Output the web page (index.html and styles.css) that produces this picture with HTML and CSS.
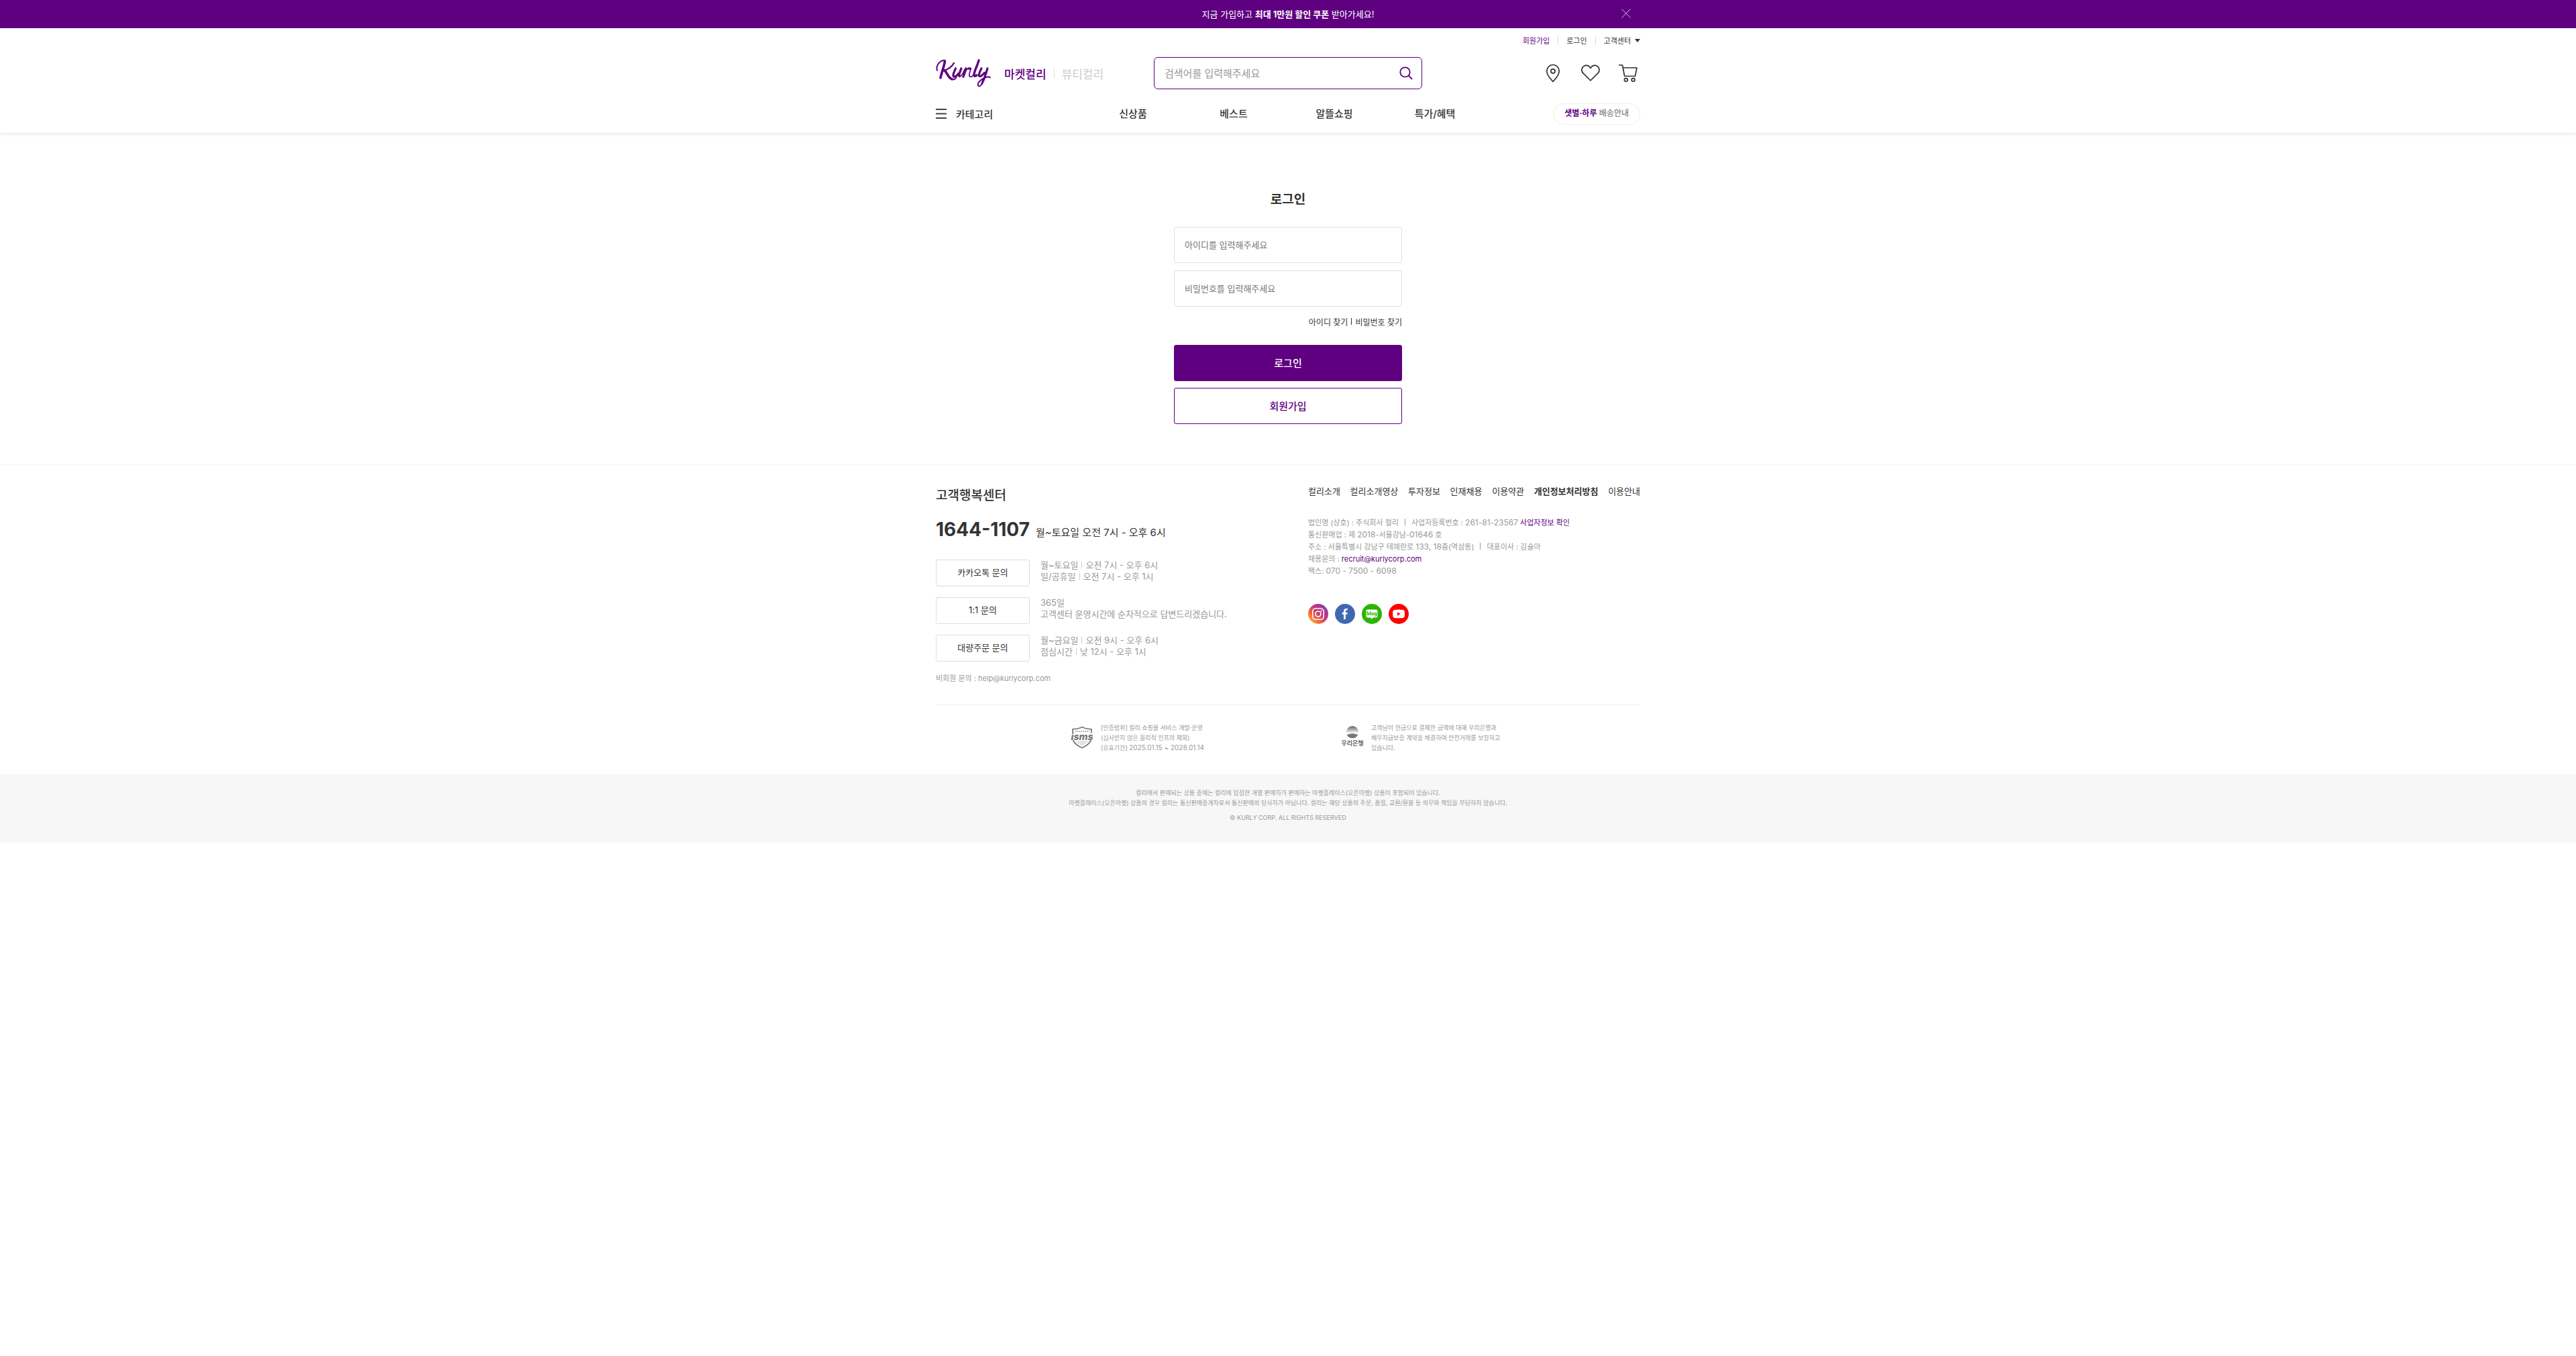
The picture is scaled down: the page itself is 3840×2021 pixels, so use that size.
FILE: index.html
```html
<!DOCTYPE html>
<html lang="ko">
<head>
<meta charset="utf-8">
<meta name="viewport" content="width=device-width, initial-scale=1">
<title>로그인 - 컬리</title>
<link rel="stylesheet" href="styles.css">
</head>
<body>
<div class="promo">
  <div class="container promo-inner">
    <a href="#" class="promo-link">지금 가입하고 <b>최대 1만원 할인 쿠폰</b> 받아가세요!</a>
    <button type="button" class="promo-close" aria-label="닫기">
      <svg width="14" height="14" viewBox="0 0 14 14" fill="none" stroke="#fff" stroke-opacity=".7" stroke-width="1"><path d="M.5.5l13 13M13.5.5l-13 13"/></svg>
    </button>
  </div>
</div>

<header class="header">
  <div class="container">
    <div class="user-menu">
      <a href="#" class="join">회원가입</a>
      <a href="#">로그인</a>
      <a href="#" class="support">고객센터</a>
    </div>
    <div class="brand-row">
      <div class="brand">
        <a href="#" class="logo" aria-label="Kurly">
          <svg width="82" height="42" viewBox="0 0 82 42" fill="none" stroke="#5f0080" stroke-linecap="round" stroke-linejoin="round">
            <path stroke-width="2" d="M2 17C0 11 4 4 11 2c2-.5 3 0 3 1.500"/>
            <path stroke-width="3.600" d="M13.500 3C13 9 9 19 7 28"/>
            <path stroke-width="2.400" d="M27 6C23 13 17 16 11 17.500"/>
            <path stroke-width="3.600" d="M13 17c4 3 5 11 11 13"/>
            <path stroke-width="2" d="M24 30c3 1 5 0 6.500-2"/>
            <path stroke-width="3.200" d="M29.500 14c-1.500 4-4 8-3.500 11 .5 3 5 1 8-3.500M38 14c-1.500 4-4 9-3 11.500"/>
            <path stroke-width="1.800" d="M35 25.500c1.500 2 5-2 8-10"/>
            <path stroke-width="3.200" d="M45 14c-1 4-2.500 8-4 12.500"/>
            <path stroke-width="1.600" d="M42.500 21c1.500-3 3.500-6 6-7"/>
            <path stroke-width="3.200" d="M48.500 14.300q1.500-.8 3.200.2"/>
            <path stroke-width="3.400" d="M64 2c-1.500 7-6.500 15-7 21 0 3 2 3 4 1"/>
            <path stroke-width="1.800" d="M52 15.500c-1.500 4-3 9-1.500 10.500 2 1.500 5-1 7-4"/>
            <path stroke-width="3.200" d="M68 14c-2 4-4.500 9-3.500 11 1.500 2 5-1 8-4.500M77 14c-2 7-5 16-8 22"/>
            <path stroke-width="2" d="M69 36c-1.500 4-5 6-6 3.500-1.500-5 6-10 12-12.500 3-1 5-.5 6 .5"/>
          </svg>
        </a>
        <a href="#" class="market on">마켓컬리</a>
        <a href="#" class="market">뷰티컬리</a>
      </div>
      <form class="search">
        <input type="text" aria-label="검색" placeholder="검색어를 입력해주세요">
        <button type="button" aria-label="검색하기">
          <svg width="20" height="20" viewBox="0 0 20 20" fill="none" stroke="#5f0080" stroke-width="1.800" stroke-linecap="round"><circle cx="8.500" cy="8.500" r="7.200"/><path d="M14 14l4.500 4.500"/></svg>
        </button>
      </form>
      <div class="shortcuts">
        <a href="#" aria-label="배송지">
          <svg width="36" height="36" viewBox="0 0 36 36" fill="none" stroke="#333" stroke-width="1.700"><path d="M18 30.500c-2.500-2.500-9.200-9-9.200-15.500a9.200 9.500 0 0 1 18.400 0c0 6.500-6.700 13-9.200 15.500z"/><circle cx="18" cy="15" r="3.100"/></svg>
        </a>
        <a href="#" aria-label="찜하기">
          <svg width="36" height="36" viewBox="0 0 36 36" fill="none" stroke="#333" stroke-width="1.700" stroke-linejoin="round"><path d="M18 29L7 18.200C3.600 14.700 4.600 9.500 8.200 7.500c3.500-1.900 7.300-.7 9.800 3 2.500-3.700 6.300-4.900 9.800-3 3.600 2 4.600 7.200 1.200 10.700z"/></svg>
        </a>
        <a href="#" aria-label="장바구니">
          <svg width="36" height="36" viewBox="0 0 36 36" fill="none" stroke="#333" stroke-width="1.700" stroke-linejoin="round"><path d="M4 6h5.500l3.200 16.500h15.800L31 10H10.300"/><circle cx="14.800" cy="28" r="2.400"/><circle cx="25.600" cy="28" r="2.400"/></svg>
        </a>
      </div>
    </div>
    <nav class="gnb">
      <button type="button" class="category">
        <svg width="16" height="15" viewBox="0 0 16 15" fill="#444"><path d="M0 0h16v2H0zM0 6.500h16v2H0zM0 13h16v2H0z"/></svg>
        카테고리
      </button>
      <ul class="gnb-list">
        <li><a href="#">신상품</a></li>
        <li><a href="#">베스트</a></li>
        <li><a href="#">알뜰쇼핑</a></li>
        <li><a href="#">특가/혜택</a></li>
      </ul>
      <a href="#" class="delivery"><b>샛별·하루</b> 배송안내</a>
    </nav>
  </div>
</header>

<main class="login">
  <h1>로그인</h1>
  <form class="login-form">
    <input type="text" aria-label="아이디" placeholder="아이디를 입력해주세요">
    <input type="password" aria-label="비밀번호" placeholder="비밀번호를 입력해주세요">
    <div class="find"><a href="#">아이디 찾기</a><a href="#">비밀번호 찾기</a></div>
    <button type="button" class="btn primary">로그인</button>
    <button type="button" class="btn">회원가입</button>
  </form>
</main>

<footer class="footer">
  <div class="container footer-top">
    <section class="cs">
      <h2>고객행복센터</h2>
      <p class="phone"><strong>1644-1107</strong> <span>월~토요일 오전 7시 - 오후 6시</span></p>
      <div class="cs-row">
        <button type="button">카카오톡 문의</button>
        <p><span class="bar">월~토요일</span>오전 7시 - 오후 6시<br><span class="bar">일/공휴일</span>오전 7시 - 오후 1시</p>
      </div>
      <div class="cs-row">
        <button type="button">1:1 문의</button>
        <p>365일<br>고객센터 운영시간에 순차적으로 답변드리겠습니다.</p>
      </div>
      <div class="cs-row">
        <button type="button">대량주문 문의</button>
        <p><span class="bar">월~금요일</span>오전 9시 - 오후 6시<br><span class="bar">점심시간</span>낮 12시 - 오후 1시</p>
      </div>
      <p class="guest">비회원 문의 : <a href="#">help@kurlycorp.com</a></p>
    </section>
    <section class="company">
      <ul class="links">
        <li><a href="#">컬리소개</a></li>
        <li><a href="#">컬리소개영상</a></li>
        <li><a href="#">투자정보</a></li>
        <li><a href="#">인재채용</a></li>
        <li><a href="#">이용약관</a></li>
        <li><a href="#" class="strong">개인정보처리방침</a></li>
        <li><a href="#">이용안내</a></li>
      </ul>
      <div class="info">
        <p><span class="bar wide">법인명 (상호) : 주식회사 컬리</span>사업자등록번호 : <span class="num">261-81-23567</span> <a href="#">사업자정보 확인</a></p>
        <p>통신판매업 : 제 <span class="num">2018</span>-서울강남-<span class="num">01646</span> 호</p>
        <p><span class="bar wide">주소 : 서울특별시 강남구 테헤란로 <span class="num">133, 18</span>층(역삼동)</span>대표이사 : 김슬아</p>
        <p>채용문의 : <a href="#">recruit@kurlycorp.com</a></p>
        <p>팩스: <span class="num">070 - 7500 - 6098</span></p>
      </div>
      <div class="social">
        <a href="#" aria-label="인스타그램">
          <svg width="30" height="30" viewBox="0 0 30 30"><defs><linearGradient id="insta" x1="0" y1="1" x2="1" y2="0"><stop offset=".1" stop-color="#fdbb4b"/><stop offset=".3" stop-color="#f56f35"/><stop offset=".58" stop-color="#c9317f"/><stop offset=".9" stop-color="#7a45b5"/></linearGradient></defs><circle cx="15" cy="15" r="15" fill="url(#insta)"/><g fill="none" stroke="#fff" stroke-width="1.600"><rect x="6.800" y="6.800" width="16.400" height="16.400" rx="4.500"/><circle cx="15" cy="15" r="4"/></g><circle cx="19.700" cy="10.300" r="1.100" fill="#fff"/></svg>
        </a>
        <a href="#" aria-label="페이스북">
          <svg width="30" height="30" viewBox="0 0 30 30"><circle cx="15" cy="15" r="15" fill="#4267b2"/><path fill="#fff" d="M13 23v-7.300h-2.300v-2.900H13v-2.100c0-2.500 1.500-3.800 3.700-3.800l2.100.1v2.600h-1.500c-1.100 0-1.400.5-1.400 1.400v1.800h2.800l-.4 2.900h-2.400V23z"/></svg>
        </a>
        <a href="#" aria-label="블로그">
          <svg width="30" height="30" viewBox="0 0 30 30"><circle cx="15" cy="15" r="15" fill="#2db400"/><path fill="#fff" d="M9 8.500h12a2.500 2.500 0 0 1 2.500 2.500v7a2.500 2.500 0 0 1-2.500 2.500h-4.500L14.800 23l-1.700-2.500H9A2.500 2.500 0 0 1 6.500 18v-7A2.500 2.500 0 0 1 9 8.500z"/><text x="15" y="17" text-anchor="middle" class="blog-text">blog</text></svg>
        </a>
        <a href="#" aria-label="유튜브">
          <svg width="30" height="30" viewBox="0 0 30 30"><circle cx="15" cy="15" r="15" fill="#f00"/><path fill="#fff" d="M8.500 9q6.500-.9 13 0 2 .3 2.200 2.200.5 3.700 0 7.400-.2 2-2.200 2.300-6.500.8-13 0-2-.3-2.200-2.300-.5-3.700 0-7.400Q6.500 9.300 8.500 9z"/><path fill="#f00" d="M13 12.300v5.400l4.500-2.700z"/></svg>
        </a>
      </div>
    </section>
  </div>
  <div class="container certs">
    <div class="cert">
      <svg width="34" height="34" viewBox="0 0 34 34"><path fill="#fff" stroke="#7b7b7b" stroke-width="1.800" d="M17 1.500C14 3.500 9.500 4.500 3 4.800V17c0 8 7 12.500 14 15.500 7-3 14-7.500 14-15.500V4.800C24.500 4.500 20 3.500 17 1.500z"/><path stroke="#b5b5b5" stroke-width="2" stroke-dasharray="2 1" d="M6 8h22"/><path fill="#fff" d="M0 10.500h34V21H0z"/><text x="17" y="20.500" text-anchor="middle" class="isms-text">isms</text><path stroke="#c4c4c4" stroke-width="1" d="M9 23.500h16M11 25.500h12M14 27.500h6"/></svg>
      <p>[인증범위] 컬리 쇼핑몰 서비스 개발·운영<br>(심사받지 않은 물리적 인프라 제외)<br>[유효기간] <span class="num">2025.01.15 ~ 2028.01.14</span></p>
    </div>
    <div class="cert">
      <div class="bank">
        <svg width="18" height="18" viewBox="0 0 18 18"><defs><linearGradient id="orb" x1="0" y1="0" x2="0" y2="1"><stop offset=".1" stop-color="#777"/><stop offset=".6" stop-color="#fff"/></linearGradient></defs><circle cx="9" cy="9" r="9" fill="url(#orb)"/><path fill="#777" d="M.8 13Q9 9.500 17.200 13A9 9 0 0 1 .8 13z"/></svg>
        <span>우리은행</span>
      </div>
      <p>고객님이 현금으로 결제한 금액에 대해 우리은행과<br>채무지급보증 계약을 체결하여 안전거래를 보장하고<br>있습니다.</p>
    </div>
  </div>
  <div class="legal">
    <p>컬리에서 판매되는 상품 중에는 컬리에 입점한 개별 판매자가 판매하는 마켓플레이스(오픈마켓) 상품이 포함되어 있습니다.</p>
    <p>마켓플레이스(오픈마켓) 상품의 경우 컬리는 통신판매중개자로서 통신판매의 당사자가 아닙니다. 컬리는 해당 상품의 주문, 품질, 교환/환불 등 의무와 책임을 부담하지 않습니다.</p>
    <p class="copy">© KURLY CORP. ALL RIGHTS RESERVED</p>
  </div>
</footer>
</body>
</html>
```
FILE: styles.css
```css
* { box-sizing: border-box; margin: 0; padding: 0; }
body { font-family: Inter, "Noto Sans CJK KR", sans-serif; font-size: 13px; color: #333; background: #fff; }
a { color: inherit; text-decoration: none; }
ul { list-style: none; }
svg { display: block; }
button, input { font: inherit; color: inherit; }
button { background: none; border: 0; cursor: pointer; }
.container { width: 100%; max-width: 1050px; margin: 0 auto; }

/* promo banner */
.promo { background: #5f0080; color: #fff; }
.promo-inner { display: grid; grid-template-columns: 1fr auto 1fr; align-items: center; height: 42px; }
.promo-link { grid-column: 2; padding-bottom: 1px; }
.promo-close { justify-self: end; padding: 0 14px 2px; }

/* header */
.header { height: 156px; box-shadow: 0 3px 4px rgba(0, 0, 0, .07); }
.user-menu { display: flex; justify-content: flex-end; align-items: center; height: 36px; font-size: 11px; }
.user-menu a + a::before { content: ""; width: 1px; height: 13px; margin: 0 12px; background: #d9d9d9; }
.user-menu a { display: flex; align-items: center; }
.user-menu .join { color: #5f0080; }
.support::after { content: ""; margin-left: 6px; border: 4px solid transparent; border-top: 5px solid #333; border-bottom: 0; }
.brand-row { display: grid; grid-template-columns: 1fr 400px 1fr; align-items: center; height: 62px; }
.brand { display: flex; align-items: center; }
.logo { margin-right: 20px; }
.market { display: flex; align-items: center; font-size: 17px; color: #ccc; }
.market.on { color: #5f0080; font-weight: 500; }
.market + .market::before { content: ""; width: 1px; height: 14px; margin: 0 11px; background: #ddd; }
.search { display: flex; align-items: center; height: 48px; padding: 0 13px 0 15px; border: 1px solid #5f0080; border-radius: 6px; }
.search input { flex: 1; border: 0; outline: 0; background: none; font-size: 15px; }
.search input::placeholder { color: #999; }
.shortcuts { display: flex; justify-content: flex-end; gap: 20px; }
.gnb { display: grid; grid-template-columns: 1fr auto 1fr; align-items: center; height: 58px; font-size: 15px; font-weight: 500; }
.category { display: flex; align-items: center; gap: 14px; justify-self: start; }
.gnb-list { display: flex; margin-left: -12px; padding-bottom: 1px; text-align: center; }
.gnb-list li { width: 150px; }
.delivery { justify-self: end; height: 32px; margin-top: 2px; padding: 0 16px; border: 1px solid #eee; border-radius: 16px; font-size: 12px; font-weight: 400; line-height: 28px; color: #666; }
.delivery b { color: #5f0080; }

/* login */
.login { width: 340px; margin: 0 auto; padding: 86px 0 60px; }
.login h1 { font-size: 19px; line-height: 28px; font-weight: 600; text-align: center; }
.login-form { display: flex; flex-direction: column; margin-top: 26px; }
.login-form input { height: 54px; padding: 0 15px; border: 1px solid #ddd; border-radius: 4px; margin-bottom: 11px; }
.login-form input::placeholder { color: #777; }
.find { display: flex; justify-content: flex-end; align-items: center; height: 22px; margin-bottom: 24px; font-size: 12px; }
.find a { display: flex; align-items: center; }
.find a + a::before { content: ""; width: 1px; height: 10px; margin: 0 5px; background: #333; }
.btn { height: 54px; padding-bottom: 2px; border: 1px solid #5f0080; border-radius: 3px; font-size: 15px; font-weight: 500; color: #5f0080; }
.btn.primary { margin-bottom: 10px; background: #5f0080; color: #fff; }

/* footer */
.footer { border-top: 1px solid #f7f7f7; }
.footer-top { display: flex; justify-content: space-between; height: 358px; padding-top: 29px; border-bottom: 1px solid #eee; }
.cs h2 { padding-top: 2px; font-size: 19px; line-height: 30px; font-weight: 500; }
.phone { display: flex; align-items: baseline; gap: 9px; margin: 16px 0 21px; line-height: 38px; font-size: 15px; }
.phone strong { font-size: 28px; font-weight: 700; }
.cs-row { display: flex; gap: 16px; margin-bottom: 16px; color: #999; line-height: 17px; }
.cs-row button { width: 140px; height: 40px; padding-bottom: 1px; border: 1px solid #ddd; border-radius: 3px; color: #333; }
.bar::after { content: ""; display: inline-block; width: 1px; height: 10px; margin: 0 5px; background: #ccc; }
.bar.wide::after { margin: 0 9px; background: #999; }
.guest { font-size: 11px; line-height: 18px; color: #999; }
.num { font-size: 12px; }
.company { width: 495px; }
.links { display: flex; justify-content: space-between; line-height: 20px; }
.strong { font-weight: 600; }
.info { margin-top: 28px; font-size: 11px; line-height: 18px; color: #999; }
.info a { color: #5f0080; }
.social { display: flex; gap: 10px; margin-top: 40px; }
.blog-text { font: 800 7px Inter, sans-serif; fill: #2db400; }
.certs { display: grid; grid-template-columns: 403px 245px; justify-content: center; height: 103px; padding-top: 26px; }
.cert { display: flex; align-items: flex-start; gap: 11px; font-size: 9px; line-height: 15px; color: #999; }
.cert > svg, .bank { margin-top: 5px; }
.cert .num { font-size: 10px; }
.isms-text { font: italic 800 14px Inter, sans-serif; fill: #777; }
.bank { display: flex; flex-direction: column; align-items: center; width: 34px; font-weight: 700; color: #666; white-space: nowrap; }
.legal { height: 102px; padding: 20px 0; background: #f7f7f7; text-align: center; font-size: 9px; line-height: 15px; color: #999; }
.copy { margin-top: 7px; }
```
